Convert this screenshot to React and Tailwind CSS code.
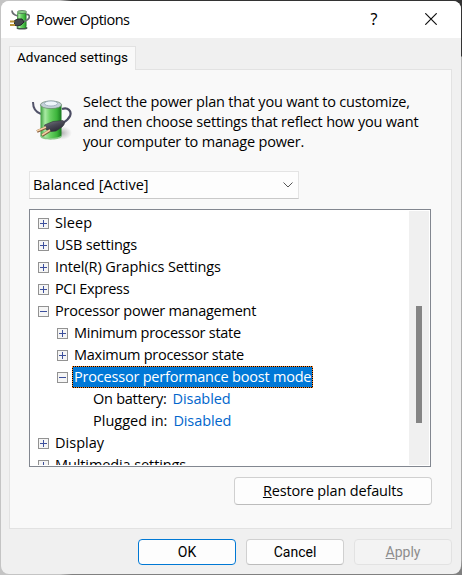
import { clsx } from "clsx";

const treeItems = [
  { label: "Sleep", level: 0, spacing: "tracking-[0.1px]" },
  { label: "USB settings", level: 0, spacing: "tracking-[-0.2px]" },
  { label: "Intel(R) Graphics Settings", level: 0, spacing: "tracking-[-0.1px]" },
  { label: "PCI Express", level: 0, spacing: "tracking-[-0.35px]" },
  { label: "Processor power management", level: 0, open: true, spacing: "tracking-[-0.24px]" },
  { label: "Minimum processor state", level: 1, spacing: "tracking-[-0.27px]" },
  { label: "Maximum processor state", level: 1, spacing: "tracking-[-0.27px]" },
  { label: "Processor performance boost mode", level: 1, open: true, selected: true, spacing: "tracking-[-0.2px]" },
  { label: "On battery:", level: 2, value: "Disabled", spacing: "tracking-[-0.25px]" },
  { label: "Plugged in:", level: 2, value: "Disabled", spacing: "tracking-[0.02px]" },
  { label: "Display", level: 0, spacing: "tracking-[0.02px]" },
  { label: "Multimedia settings", level: 0, spacing: "tracking-[-0.1px]" },
];

function BatteryIcon({ className }) {
  return (
    <svg viewBox="0 0 40 42" className={className}>
      <defs>
        <linearGradient id="cell" x1="0" x2="1">
          <stop offset="0" stopColor="#3a9c3c" />
          <stop offset="0.22" stopColor="#a9eaa4" />
          <stop offset="0.45" stopColor="#6bd165" />
          <stop offset="0.78" stopColor="#3cb43b" />
          <stop offset="1" stopColor="#16771c" />
        </linearGradient>
        <linearGradient id="plug" x1="0" y1="0" x2="0.6" y2="1">
          <stop offset="0" stopColor="#7d7e88" />
          <stop offset="0.5" stopColor="#4b4b57" />
          <stop offset="1" stopColor="#2b2b35" />
        </linearGradient>
        <radialGradient id="shade">
          <stop offset="0" stopColor="#777" stopOpacity="0.6" />
          <stop offset="1" stopColor="#999" stopOpacity="0" />
        </radialGradient>
      </defs>
      <ellipse cx="29" cy="33" rx="11" ry="7" fill="url(#shade)" />
      <path d="M1 2C1 8 3 12 9 14" fill="none" stroke="#52536a" strokeWidth="2" />
      <path d="M8.500 4.500V36C9.500 40 28 40 29.500 36V4.500Z" fill="url(#cell)" />
      <path d="M8.500 35C10 39 28 39 29.500 35V37C27 40.500 10 40.500 8.500 37Z" fill="#8acb87" />
      <ellipse cx="19" cy="4.800" rx="10.500" ry="3.800" fill="#c4d0d8" stroke="#66836d" strokeWidth="0.700" />
      <ellipse cx="19" cy="3.500" rx="6.500" ry="2.500" fill="#eef5fa" stroke="#8fa2b3" strokeWidth="0.700" />
      <path d="M30 9C36 7 40 11 38 16C36.500 19.500 34 21 31 23" fill="none" stroke="#4b4c62" strokeWidth="2.200" />
      <path d="M12.500 25L21 21.500L31 20.500C33.500 22 32.500 25 30 27L24 31L19 31.500L14 29.500Z" fill="url(#plug)" stroke="#30303a" strokeWidth="0.600" />
      <path d="M5 31.500L14 27.500M10 35.500L18 30.500" stroke="#80583a" strokeWidth="2.800" />
      <path d="M5 31L14 27M10 35L18 30" stroke="#f3cfa4" strokeWidth="1.500" />
    </svg>
  );
}

function TitleIcon() {
  return (
    <svg viewBox="0 0 20 20" className="size-5">
      <ellipse cx="12" cy="18" rx="5.500" ry="1.500" fill="#435849" />
      <rect x="7" y="2" width="9.500" height="16" rx="2" fill="url(#cell)" />
      <ellipse cx="12" cy="2" rx="4.600" ry="1.500" fill="#8fd48d" stroke="#3c5d44" strokeWidth="0.700" />
      <path d="M2 0.500C2 3 4 5 8 6M16 4.500C20 4 20.500 8 17 10L13 12" fill="none" stroke="#6a6d72" strokeWidth="1.700" />
      <path d="M4.500 10.500L8 9L12 9L14 12L11 15L7 16L4.500 15Z" fill="#45484d" stroke="#24272b" />
      <path d="M0 11.500H4.500M0 15H5" stroke="#b99438" strokeWidth="2" />
    </svg>
  );
}

function Expander({ open }) {
  return (
    <svg viewBox="0 0 11 11" className="size-[11px] shrink-0" shapeRendering="crispEdges">
      <rect x="0.500" y="0.500" width="10" height="10" fill="#f5f5f5" stroke="#929292" />
      <path d="M2 5.500H9" stroke="#3c4f9c" />
      {!open && <path d="M5.500 2V9" stroke="#3c4f9c" />}
    </svg>
  );
}

function TreeRow({ item }) {
  const { label, level, open, selected, value, spacing } = item;

  return (
    <div
      className={clsx(
        "flex h-[22px] shrink-0 items-center whitespace-nowrap",
        level === 0 && "pl-[7px]",
        level === 1 && "pl-[26px]",
        level === 2 && "pl-[60px]"
      )}
    >
      {level < 2 && <Expander open={open} />}
      {selected ? (
        // Focus rectangle: orange dots over a black edge
        <span className="ml-1 flex h-[22px] border border-dotted border-[#ff8728] bg-black">
          <span className={clsx("flex items-center bg-[#0078d7] px-px text-white", spacing)}>{label}</span>
        </span>
      ) : (
        <span className={clsx("flex h-[22px] items-center pl-[2px]", level < 2 && "ml-1", spacing)}>
          {label}
        </span>
      )}
      {value && <span className="ml-[6px] tracking-[-0.1px] text-[#0066cc]">{value}</span>}
    </div>
  );
}

export default function App() {
  return (
    <div className="flex h-[575px] w-[462px] flex-col overflow-hidden bg-[linear-gradient(to_bottom,#333_56px,#b8b8b8_57px,#a8a8a8_560px,#808080_568px)] font-['Open_Sans','Noto_Sans',sans-serif] text-[14.5px] leading-5 text-black">
      <div className="h-[575px] bg-[linear-gradient(to_right,#c4c4c4_60px,transparent_72px)] p-px">
        <div className="flex h-[573px] flex-col overflow-hidden rounded-lg bg-[#f0f0f0]">
          {/* Title bar */}
          <header className="flex h-[37px] shrink-0 items-center bg-white pl-[9px]">
            <TitleIcon />
            <h1 className="ml-[6px] tracking-[-0.5px]">Power Options</h1>
            <button className="mb-px ml-auto w-4 text-center font-['Noto_Sans',sans-serif] text-[16px]">?</button>
            <button aria-label="Close" className="mb-[2px] ml-[43px] mr-[24px]">
              <svg viewBox="0 0 12 12" className="size-3">
                <path d="M0.300 0.300L11.700 11.700M11.700 0.300L0.300 11.700" stroke="#111" strokeWidth="1.200" />
              </svg>
            </button>
          </header>

          <main className="flex flex-col px-2 pt-2">
            <div className="z-10 flex h-6 w-[127px] items-center border border-b-0 border-[#e2e2e2] bg-[#f9f9f9] pb-[3px] pl-[7px] font-['Roboto','Liberation_Sans',sans-serif] text-[13.5px]">
              <span className="whitespace-nowrap">Advanced settings</span>
            </div>
            <section className="-mt-px flex h-[460px] w-[443px] flex-col border border-[#e2e2e2] bg-[#f9f9f9] px-[19px] pt-[22px]">
              <div className="flex h-[79px]">
                <BatteryIcon className="ml-[3px] mt-2 h-[42px] w-10 shrink-0" />
                <p className="ml-[11px] whitespace-nowrap tracking-[-0.2px]">
                  Select the power plan that you want to customize,
                  <br />
                  and then choose settings that reflect how you want
                  <br />
                  your computer to manage power.
                </p>
              </div>

              <button className="flex h-7 w-[270px] items-center justify-between border border-[#e4e4e4] border-b-[#c9c9c9] bg-[#fdfdfd] pl-[3px] pr-[5px]">
                <span>Balanced [Active]</span>
                <svg viewBox="0 0 10 6" className="h-[6px] w-[10px]">
                  <path d="M0.500 0.500L5 5L9.500 0.500" fill="none" stroke="#555" />
                </svg>
              </button>

              <div className="mt-[10px] flex h-[258px] w-[402px] border border-[#828790] bg-white p-px">
                <div className="mt-px flex flex-1 flex-col overflow-hidden">
                  {treeItems.map((item) => (
                    <TreeRow key={item.label} item={item} />
                  ))}
                </div>
                <div className="w-5 bg-[#f0f0f0] pl-[7px] pt-[95px]">
                  <div className="h-[117px] w-[6px] bg-[#858585]" />
                </div>
              </div>

              <button className="mt-[10px] h-7 w-[198px] shrink-0 self-end rounded border border-[#d0d0d0] border-b-[#bcbcbc] bg-[#fdfdfd]">
                <span className="tracking-[-0.16px]">
                  <u>R</u>estore plan defaults
                </span>
              </button>
            </section>

            <footer className="mt-[10px] flex gap-[10px] pl-[129px] font-['Roboto','Liberation_Sans',sans-serif] text-[14px]">
              <button className="h-[26px] w-[98px] rounded border border-[#0078d4] bg-[#fdfdfd]">OK</button>
              <button className="h-[26px] w-[98px] rounded border border-[#d0d0d0] border-b-[#bcbcbc] bg-[#fdfdfd]">Cancel</button>
              <button className="h-[26px] w-[98px] rounded border border-[#e2e2e2] bg-[#f3f3f3] text-[#8d8d8d]">
                <u>A</u>pply
              </button>
            </footer>
          </main>
        </div>
      </div>
    </div>
  );
}
